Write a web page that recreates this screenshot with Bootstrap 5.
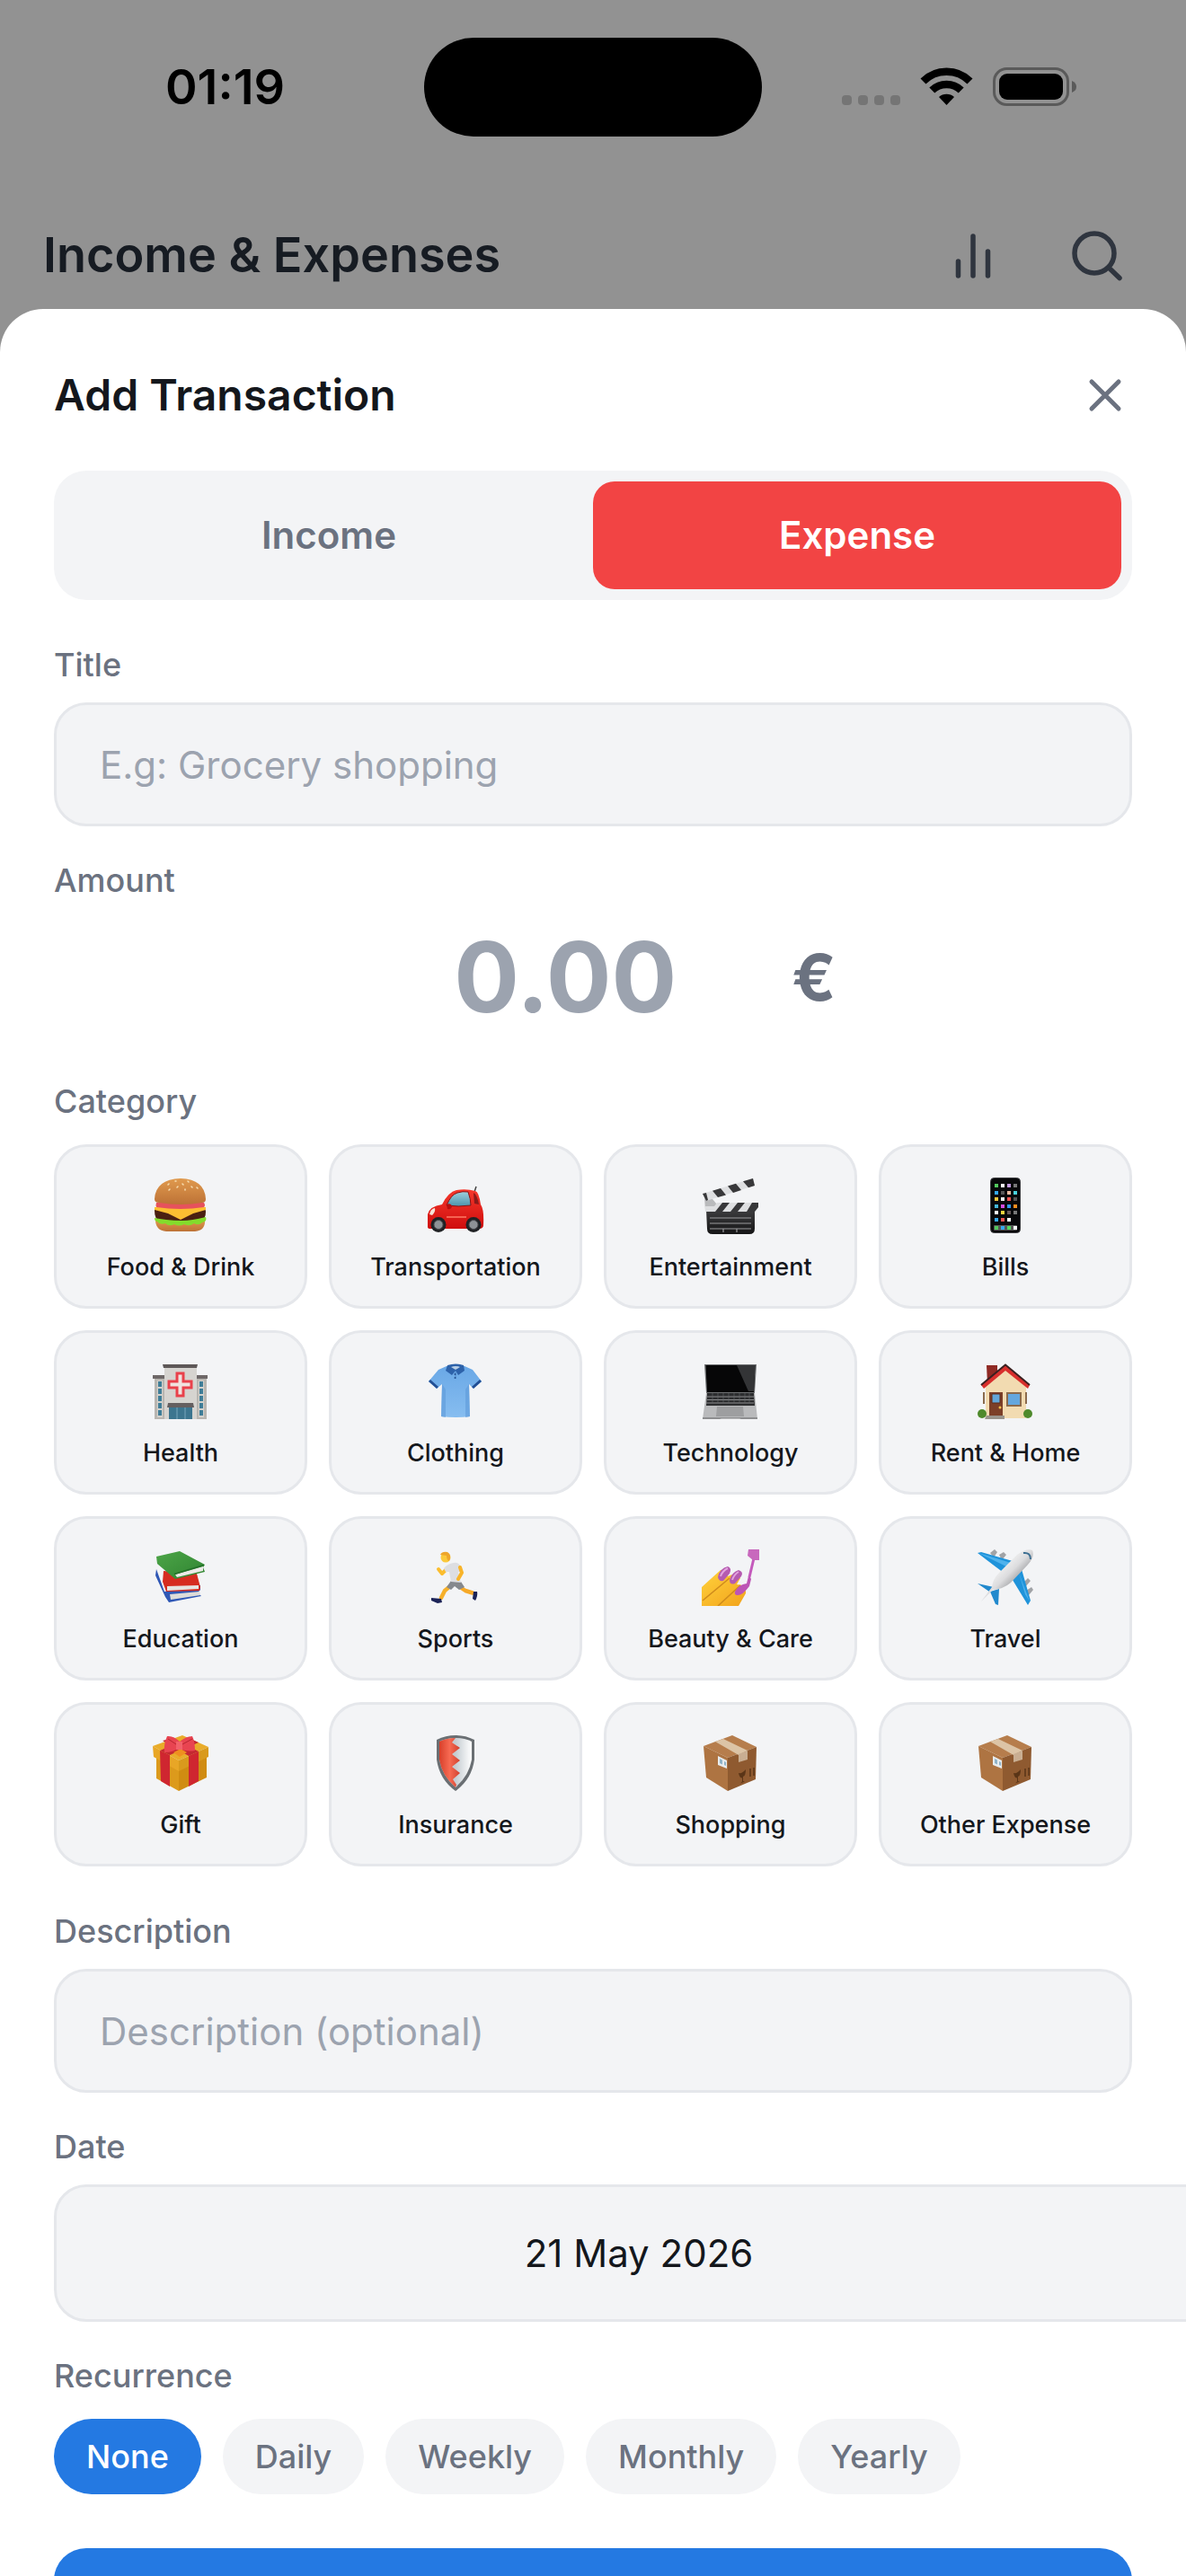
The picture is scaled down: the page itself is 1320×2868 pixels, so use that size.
<!DOCTYPE html>
<html lang="en">
<head>
<meta charset="utf-8">
<meta name="viewport" content="width=device-width, initial-scale=1">
<title>Add Transaction</title>
<link href="https://cdn.jsdelivr.net/npm/bootstrap@5.3.0/dist/css/bootstrap.min.css" rel="stylesheet">
<style>
  :root { --ink: #14171c; --muted: #6b7280; --soft: #9ca3af; --field: #f3f4f6; --line: #e5e7eb; --blue: #2479e2; --red: #f24444; }
  body { font-family: Inter, "Liberation Sans", sans-serif; color: var(--ink); background: #929292; }
  .screen { height: 100vh; overflow: hidden; }
  .status-bar { padding: 42px 120px 0; color: #000; }
  .status-side { flex: 1 1 0; }
  .clock { font-size: 54px; line-height: 64px; font-weight: 600; padding-left: 64px; }
  .island { width: 376px; height: 110px; border-radius: 55px; background: #000; }
  .app-bar { padding: 72px 66px 0 48px; height: 192px; color: #161b22; }
  .app-title { font-size: 54px; line-height: 72px; font-weight: 600; }
  .app-actions { gap: 63px; }
  .icon-btn { border: 0; background: none; padding: 0; line-height: 0; color: #2f353f; }
  .sheet { background: #fff; border-radius: 48px 48px 0 0; padding: 60px 60px 0; overflow: hidden; }
  .sheet-title { font-size: 48px; line-height: 72px; font-weight: 600; }
  .close-btn { color: var(--muted); }
  .segment { background: var(--field); border-radius: 36px; padding: 12px; margin-top: 48px; }
  .segment-btn { flex: 1 1 0; height: 120px; border: 0; border-radius: 24px; background: none; color: var(--muted); font-size: 42px; line-height: 60px; font-weight: 600; }
  .segment-btn.active { background: var(--red); color: #fff; }
  .field-label { display: block; font-size: 36px; line-height: 48px; font-weight: 500; color: var(--muted); margin: 36px 0 18px; }
  .section-label { margin-top: 48px; }
  .group-label { margin-bottom: 24px; }
  .field-box { display: block; width: 100%; background: var(--field); border: 3px solid var(--line); border-radius: 36px; height: 138px; padding: 0 48px; font-size: 42px; line-height: 60px; color: var(--ink); }
  .field-box::placeholder, .amount-input::placeholder { color: var(--soft); opacity: 1; }
  .amount-row { gap: 12px; }
  .amount-input { width: 480px; height: 132px; border: 0; background: none; padding: 0; text-align: center; font-size: 108px; line-height: 132px; font-weight: 700; color: var(--ink); }
  .currency { font-size: 72px; line-height: 90px; font-weight: 700; color: var(--muted); }
  .cat-grid { display: grid; grid-template-columns: repeat(4, 1fr); gap: 24px; }
  .cat-btn { background: var(--field); border: 3px solid var(--line); border-radius: 36px; padding: 33px 0 27px; gap: 20px; color: var(--ink); font-size: 27px; line-height: 33px; font-weight: 500; }
  .cat-btn svg { width: 64px; height: 64px; }
  .date-box { width: calc(100% + 102px); height: 153px; text-align: center; }
  .chip-btn { border: 0; border-radius: 42px; height: 84px; padding: 0 36px; background: var(--field); color: var(--muted); font-size: 36px; line-height: 48px; font-weight: 500; }
  .chip-btn.active { background: var(--blue); color: #fff; }
  .chip-row { gap: 24px; }
  .save-btn { display: block; width: 100%; border: 0; border-radius: 36px; background: var(--blue); color: #fff; height: 150px; margin-top: 60px; }
</style>
</head>
<body>
<svg width="0" height="0" class="position-absolute" aria-hidden="true">
  <defs>
    <linearGradient id="bun" x2="0" y2="1"><stop stop-color="#e09a4e"/><stop offset="1" stop-color="#bd7236"/></linearGradient>
    <linearGradient id="glass" x2="0" y2="1"><stop stop-color="#9fd0dc"/><stop offset="1" stop-color="#4c93ac"/></linearGradient>
    <linearGradient id="carred" x2="0" y2="1"><stop stop-color="#f5382c"/><stop offset="1" stop-color="#cf0d0d"/></linearGradient>
    <linearGradient id="cloth" x2="0" y2="1"><stop stop-color="#6aa8e6"/><stop offset="1" stop-color="#86bdf0"/></linearGradient>
    <linearGradient id="slate" x2="0" y2="1"><stop stop-color="#3d3d3f"/><stop offset="1" stop-color="#151516"/></linearGradient>
    <linearGradient id="silver" x1=".3" y1=".3" x2=".7" y2=".7"><stop stop-color="#f7f7f7"/><stop offset=".5" stop-color="#dcdcde"/><stop offset="1" stop-color="#8f9194"/></linearGradient>
    <linearGradient id="skin" x2="1" y2="1"><stop stop-color="#ffd23c"/><stop offset="1" stop-color="#f2a31c"/></linearGradient>
    <linearGradient id="green" x2="1" y2="1"><stop stop-color="#4da548"/><stop offset="1" stop-color="#2f8431"/></linearGradient>
    <linearGradient id="shieldred" x2="1" y2="0"><stop stop-color="#d8402b"/><stop offset=".5" stop-color="#f76a52"/><stop offset="1" stop-color="#d2412f"/></linearGradient>
    <linearGradient id="steel" x2="1" y2="0"><stop stop-color="#b9c2c8"/><stop offset=".5" stop-color="#c5ccd1"/><stop offset="1" stop-color="#fff"/></linearGradient>
    <symbol id="parcel" viewBox="0 0 64 64">
      <path d="M34 1L61 14L29 26L2 13Z" fill="#b67d4c"/>
      <path d="M2 13L29 26V63L5 48Z" fill="#ae7442"/>
      <path d="M29 26L61 14L60 50L29 63Z" fill="#8f5a30"/>
      <path d="M15 8L24 5L51 18L41 23Z" fill="#dcc4a6"/>
      <path d="M41 22L51 18V28L41 31Z" fill="#c9ae92"/>
      <path d="M18 24L28 29V38L18 34Z" fill="#e8ecee"/><path d="M20 27l3 1.500v5l-3-1.500zM25 30l2 1v4l-2-1z" fill="#8fb3c8"/>
      <path d="M41 43q4 1 8-4q0 7-3 8v5l2 .500l-5 2l2-2v-4q-3 0-4-5.500z" fill="#5a3517"/>
      <path d="M54 38v9M58 37v9" stroke="#5a3517" stroke-width="1.500"/>
    </symbol>
  </defs>
</svg>
<div class="screen d-flex flex-column">
  <div class="status-bar d-flex align-items-center flex-shrink-0">
    <div class="status-side"><span class="clock">01:19</span></div>
    <div class="island"></div>
    <div class="status-side d-flex justify-content-end">
      <svg width="264" height="48" viewBox="0 0 264 48" role="img" aria-label="Signal, Wi-Fi and battery">
        <g fill="#757575"><rect x="1" y="33" width="11" height="11" rx="4"/><rect x="19" y="33" width="11" height="11" rx="4"/><rect x="37" y="33" width="11" height="11" rx="4"/><rect x="55" y="33" width="11" height="11" rx="4"/></g>
        <g fill="none" stroke="#000" stroke-width="8.500"><path d="M91.500 17.500A37 37 0 0 1 143.500 17.500"/><path d="M101.300 27.500A23.200 23.200 0 0 1 133.700 27.500"/></g>
        <path d="M109 35A13 13 0 0 1 126 35L117.500 44Z"/>
        <rect x="170.500" y="3.500" width="82" height="40" rx="14" fill="none" stroke="#5a5a5a" stroke-width="3"/>
        <rect x="176" y="9" width="71" height="29" rx="9"/>
        <path d="M257 17q5 2 5 6.500t-5 6.500z" fill="#5a5a5a"/>
      </svg>
    </div>
  </div>
  <header class="app-bar d-flex align-items-center justify-content-between flex-shrink-0">
    <h1 class="app-title m-0">Income &amp; Expenses</h1>
    <div class="app-actions d-flex align-items-center">
      <button class="icon-btn" aria-label="Statistics"><svg width="72" height="72" viewBox="0 0 72 72" fill="none" stroke="currentColor" stroke-width="5.500" stroke-linecap="round"><path d="M19.500 59V43M36 59V15M52.500 59V32"/></svg></button>
      <button class="icon-btn" aria-label="Search"><svg width="72" height="72" viewBox="0 0 72 72" fill="none" stroke="currentColor" stroke-width="5.500" stroke-linecap="round"><circle cx="36" cy="34" r="22"/><path d="M52 50L64 61.500"/></svg></button>
    </div>
  </header>

  <main class="sheet flex-grow-1">
    <div class="d-flex align-items-center justify-content-between">
      <h2 class="sheet-title m-0">Add Transaction</h2>
      <button class="icon-btn close-btn" aria-label="Close"><svg width="60" height="60" viewBox="0 0 60 60" fill="none" stroke="currentColor" stroke-width="5" stroke-linecap="round"><path d="M15 15L45 45M45 15L15 45"/></svg></button>
    </div>
    <div class="segment d-flex" role="group" aria-label="Type">
      <button class="segment-btn">Income</button>
      <button class="segment-btn active">Expense</button>
    </div>

    <form>
      <label class="field-label section-label" for="title">Title</label>
      <input class="field-box" id="title" type="text" placeholder="E.g: Grocery shopping">

      <label class="field-label" for="amount">Amount</label>
      <div class="amount-row d-flex align-items-center justify-content-center">
        <input class="amount-input" id="amount" type="text" inputmode="decimal" placeholder="0.00">
        <span class="currency">€</span>
      </div>

      <h3 class="field-label section-label group-label" id="cat-label">Category</h3>
      <div class="cat-grid" role="group" aria-labelledby="cat-label">
        <button type="button" class="cat-btn d-flex flex-column align-items-center">
          <svg viewBox="0 0 64 64"><path d="M4 48H59Q60 60 48 61H16Q4 60 4 48Z" fill="url(#bun)"/><path d="M3 36Q3 34 8 34H56Q60 35 60 39Q60 48 54 49H9Q3 48 3 38Z" fill="#4a2012"/><path d="M3 46Q8 47 16 48T34 49T60 45Q62 50 56 51Q52 55 47 52Q42 56 36 53Q30 56 25 53Q19 56 15 52Q9 54 6 50Q3 50 3 46Z" fill="#84dc2c"/><path d="M3 34L60 34V37L46 41L32 48L18 41L3 37Z" fill="#fcbe32"/><path d="M5 29H58Q60 32 58 34Q32 38 5 34Q4 32 5 29Z" fill="#e6525c"/><path d="M3 25Q4 3 32 2Q59 3 60 25Q60 29 56 29Q32 33 8 29Q3 29 3 25Z" fill="url(#bun)"/><g stroke="#f7dfb2" stroke-width="1.500" stroke-linecap="round"><path d="M18 9l1-1M26 5l1 0M34 8l1 1M40 5l1 1M44 11l1 1M28 12l1-1M37 14v1M20 14l-1 1M50 12l1 1"/></g></svg>Food &amp; Drink
        </button>
        <button type="button" class="cat-btn d-flex flex-column align-items-center">
          <svg viewBox="0 0 64 64"><path d="M53 17L55 11" stroke="#444" stroke-width="1.500"/><path d="M1 56V42Q3 33 17 31Q24 17 33 15Q44 13 54 16Q58 17 60 31Q64 37 63 54Q63 58 58 58H4Q1 58 1 56Z" fill="url(#carred)"/><path d="M22 32Q27 20 34 18Q40 16 46 17Q49 25 49 32Q35 34 22 32Z" fill="url(#glass)" stroke="#8b1010" stroke-width="1"/><path d="M52 18Q56 20 58 31L53 30Z" fill="#8b1a1a"/><path d="M22 31q5-2 6 2q-1 4-5 3z" fill="#b80d0d"/><path d="M3 42Q4 36 9 35Q10 39 6 43Z" fill="#f6e4d8"/><path d="M22 45H44" stroke="#ff7b66" stroke-width="1.500"/><g fill="#202225"><circle cx="13" cy="53.500" r="8.500"/><circle cx="52" cy="53.500" r="8.500"/></g><g fill="#8d9296" stroke="#4b4e52"><circle cx="13" cy="53.500" r="5"/><circle cx="52" cy="53.500" r="5"/></g></svg>Transportation
        </button>
        <button type="button" class="cat-btn d-flex flex-column align-items-center">
          <svg viewBox="0 0 64 64"><path d="M3 22L12 25L17 31V38H4Z" fill="#b9babc"/><path d="M1 19L57 2L59 10L5 27Z" fill="#dedfe1"/><path d="M12 15.700L21 12.900L27 20.500L18 23ZM29 10.500L38 7.800L44 15L35 18ZM46 5.300L57 2L59 10L52 12.300ZM1 19L5 18L7 26L5 27Z" fill="#38383a"/><path d="M5 37H59V58Q59 64 53 64H12Q6 64 6 58Z" fill="url(#slate)"/><path d="M17 29H63V34L60 39H4V33H14Z" fill="#dedfe1"/><path d="M23 29h8l-8 10h-8zM40 29h8l-8 10h-8zM56 29h7v5l-4 5h-9z" fill="#38383a"/><path d="M9 46H55M9 52H55M9 58H55M24 58V62M39 58V62" stroke="#9b9b9d" stroke-width="1.200"/></svg>Entertainment
        </button>
        <button type="button" class="cat-btn d-flex flex-column align-items-center">
          <svg viewBox="0 0 64 64"><rect x="15.500" y="1.500" width="33" height="61" rx="4" fill="#08080a" stroke="#3b3b3f"/><rect x="19" y="54" width="26" height="6" rx="1" fill="#555"/><g><path d="M20 8h4v4h-4z" fill="#52c95e"/><path d="M27 8h4v4h-4z" fill="#fff"/><path d="M34 8h4v4h-4z" fill="#c39be0"/><path d="M41 8h4v4h-4z" fill="#777"/><path d="M20 16h4v4h-4z" fill="#34a8ee"/><path d="M27 16h4v4h-4z" fill="#555"/><path d="M34 16h4v4h-4z" fill="#e7b8a0"/><path d="M41 16h4v4h-4z" fill="#49d1dc"/><path d="M20 23h4v4h-4z" fill="#f6c83c"/><path d="M27 23h4v4h-4z" fill="#eee"/><path d="M34 23h4v4h-4z" fill="#ee5350"/><path d="M41 23h4v4h-4z" fill="#555"/><path d="M20 31h4v4h-4z" fill="#45b8d8"/><path d="M27 31h4v4h-4z" fill="#d64be0"/><path d="M34 31h4v4h-4z" fill="#2f9af0"/><path d="M41 31h4v4h-4z" fill="#f68d1e"/><path d="M20 38h4v4h-4z" fill="#fff"/><path d="M27 38h4v4h-4z" fill="#f5d33f"/><path d="M34 38h4v4h-4z" fill="#67595a"/><path d="M41 38h4v4h-4z" fill="#777"/><path d="M20 46h4v4h-4z" fill="#34a8ee"/><path d="M27 46h4v4h-4z" fill="#ee5350"/><path d="M34 46h4v4h-4z" fill="#fff"/><path d="M20 55h4v4h-4z" fill="#52c95e"/><path d="M27 55h4v4h-4z" fill="#34a8ee"/><path d="M34 55h4v4h-4z" fill="#52d95e"/><path d="M41 55h4v4h-4z" fill="#fff"/></g></svg>Bills
        </button>
        <button type="button" class="cat-btn d-flex flex-column align-items-center">
          <svg viewBox="0 0 64 64"><path d="M3 17H61V63H3Z" fill="#b9b6b1"/><path d="M1 14H62V18H1Z" fill="#6e6868"/><path d="M14 5H50V63H14Z" fill="#d6d4d0"/><path d="M12 2H51L50 6H13Z" fill="#5e5858"/><path d="M6 20h6v41H6zM52 20h6v41h-6z" fill="#d3d1cc"/><path d="M7 21h4v6H7zM7 29h4v6H7zM7 37h4v6H7zM7 45h4v6H7zM7 53h4v6H7zM53 21h4v6h-4zM53 29h4v6h-4zM53 37h4v6h-4zM53 45h4v6h-4zM53 53h4v6h-4z" fill="#3f7d98"/><path d="M28 12H35V21H44V28H35V37H28V28H19V21H28Z" fill="#f0e2df" stroke="#e9414b" stroke-width="3"/><path d="M19 49H45V63H19Z" fill="#3c758f"/><path d="M28 50V63M37 50V63" stroke="#78a7bb"/><path d="M18 45H46L47 50H17Z" fill="#655f60"/></svg>Health
        </button>
        <button type="button" class="cat-btn d-flex flex-column align-items-center">
          <svg viewBox="0 0 64 64"><path d="M22 4L42 4L51 8L61 21L52 29L47 24L48 60Q32 62 16 60L17 24L11 29L2 21L13 8Z" fill="url(#cloth)"/><path d="M17 24L16 60Q19 61 21 61V30ZM47 24L48 60Q45 61 43 61V30Z" fill="#5e9ad8" opacity=".6"/><path d="M2 21L11 29L13 27L4 19ZM61 21L52 29L50 27L59 19Z" fill="#234f94"/><path d="M23 3Q32 0 41 3L42 9L35 14L32 9L28 14L21 9Z" fill="#2d62aa"/><path d="M27 5Q32 3 37 5L32 8Z" fill="#b8cfe6"/><path d="M32 10V18" stroke="#4c86c8"/><circle cx="31.500" cy="13" r="1" fill="#24508f"/><circle cx="31.500" cy="17" r="1" fill="#24508f"/></svg>Clothing
        </button>
        <button type="button" class="cat-btn d-flex flex-column align-items-center">
          <svg viewBox="0 0 64 64"><path d="M3 2H61L59 34H5Z" fill="#6d6f71"/><path d="M4.500 3H59.500L58 33H6Z" fill="#060607"/><path d="M39 3H59.500L58 32H52Z" fill="#333436"/><path d="M5 34H59L62 63H1Z" fill="#b9babc"/><path d="M6 34H58L59 48H5Z" fill="#2c2d2f"/><path d="M6 38H58M6 41.500H58M5 45H58" stroke="#8a8b8d" stroke-width="1"/><path d="M12 34v11M18 34v11M24 34v11M30 34v11M36 34v11M42 34v11M48 34v11M53 34v11" stroke="#6a6b6d" stroke-width=".6"/><path d="M17 49H46L47 60H16Z" fill="#9d9ea0"/><path d="M1 61H62V63H44L42 62H22L20 63H1Z" fill="#8d8e90"/></svg>Technology
        </button>
        <button type="button" class="cat-btn d-flex flex-column align-items-center">
          <svg viewBox="0 0 64 64"><path d="M11 3H23V16L12 24Z" fill="#8f2a24"/><path d="M10 27L32 8L55 27V62H10Z" fill="#f2dbb1"/><path d="M5 25L32 3L59 25L57 29L32 9L8 29Z" fill="#d82f2c"/><path d="M5 25L32 2.500L59 25" fill="none" stroke="#3a2020" stroke-width="2"/><path d="M7 33h2v13H7zM54 33h2v13h-2z" fill="#8a6a4c"/><path d="M14 33H29V61H14Z" fill="#7c3f28"/><path d="M17 35h9v10h-9z" fill="#63a6d8" stroke="#5c2b1a"/><path d="M34 34H49V48H34Z" fill="#64a7de" stroke="#8a6a4c" stroke-width="2"/><circle cx="26" cy="50" r="1.500" fill="#f2c14a"/><g fill="#4f8a2c"><circle cx="6" cy="57" r="5"/><circle cx="57" cy="57" r="5"/></g><path d="M11 59H31V63H9Z" fill="#9a948c"/></svg>Rent &amp; Home
        </button>
        <button type="button" class="cat-btn d-flex flex-column align-items-center">
          <svg viewBox="0 0 64 64"><path d="M5 23L14 48L54 41V46L51 49L55 53L19 60L15 54L4 30Z" fill="#2f57b5"/><path d="M20 51L53 48L54 52L21 57Z" fill="#dddcd9"/><path d="M13 25L50 28L54 43L53 47L16 48L12 37Z" fill="#d62c20"/><path d="M17 42L52 41V45L17 47Z" fill="#e6e5e2"/><path d="M5 9L31 3L59 18L57 21L59 26L26 34L6 17Z" fill="url(#green)"/><path d="M26 29L57 20L57 25L28 32Z" fill="#eceae7"/><path d="M25 28.500L58 18.500" stroke="#23702a" stroke-width="1.500"/></svg>Education
        </button>
        <button type="button" class="cat-btn d-flex flex-column align-items-center">
          <svg viewBox="0 0 64 64" fill="none" stroke-linecap="round" stroke-linejoin="round"><path d="M22 23L17 28L13 23" stroke="#fbbd2e" stroke-width="4"/><path d="M26 42L20 47L16 55" stroke="#f6b02a" stroke-width="4.500"/><path d="M37 43L43 47L51 49.500" stroke="#f6a928" stroke-width="4.500"/><path d="M5 55L16 56L17 60L12 61L5 58ZM52 48L56 48Q57 53 54 58L51 56Z" fill="#1b2357"/><path d="M27 36L38 37L42 43L36 46L31 42L27 46L22 43Z" fill="#85888d"/><path d="M19 22Q23 17 30 16Q36 15 38 21L39 26L35 26L38 38L27 37L25 26L21 26Z" fill="#dddee2"/><path d="M37 21L39 27L35 34" stroke="#f8b42a" stroke-width="4"/><circle cx="21" cy="10" r="5.500" fill="#fbc93b"/><path d="M15 7Q17 3 23 4Q28 7 25 14Q22 13 22 8Z" fill="#eea52a"/></svg>Sports
        </button>
        <button type="button" class="cat-btn d-flex flex-column align-items-center">
          <svg viewBox="0 0 64 64"><path d="M0 43L21 24Q28 23 29 31Q38 26 43 33L39 40Q50 40 49 50L41 64H0Z" fill="url(#skin)"/><path d="M1 58L31 33M18 64L43 41" stroke="#d08c1c" stroke-width="1.500"/><path d="M18 32Q20 22 29 20Q34 22 31 28L24 36Q19 37 18 32ZM31 35Q33 27 41 24Q47 26 44 31L37 39Q31 41 31 35Z" fill="#b55bb0"/><path d="M21 31Q23 25 29 22M34 35Q36 29 41 26" stroke="#e2a4df" stroke-width="2" fill="none"/><path d="M37 48Q41 40 50 39L52 31L54 32L55 34L53 42Q45 53 39 52Q36 51 37 48Z" fill="#bd55b5"/><path d="M53 32L58 11" stroke="#c45abc" stroke-width="3"/><path d="M52 1H64V13H57L51 8Z" fill="#c868bd"/></svg>Beauty &amp; Care
        </button>
        <button type="button" class="cat-btn d-flex flex-column align-items-center">
          <svg viewBox="0 0 64 64"><path d="M15 5l5-4l3 3l-4 6zM25 7l5-3l3 3l-5 6zM52 38l5-5l3 3l-6 7zM55 47l6-4l2 3l-5 6z" fill="#a1a3a6"/><path d="M1 5L5 4L40 14L30 27L18 18ZM50 23L40 35L57 63L60 58Z" fill="#1f93da"/><path d="M1 39L19 43L14 48ZM15 48L25 45L24 63L21 62Z" fill="#2189cd"/><path d="M2 5L38 16L33 20ZM47 27L59 59L54 51Z" fill="#4fb2ec"/><path d="M62 2Q65 9 57 18L38 38Q30 45 18 46L5 59L17 43Q18 34 25 27L45 7Q56-1 62 2Z" fill="url(#silver)"/><path d="M52 5Q60 4 60 12" stroke="#3d6f92" stroke-width="2" fill="none"/></svg>Travel
        </button>
        <button type="button" class="cat-btn d-flex flex-column align-items-center">
          <svg viewBox="0 0 64 64"><path d="M5 24L30 38V63L5 49Z" fill="#dc9a1c"/><path d="M30 38L61 24V48L30 63Z" fill="#d08c12"/><path d="M1 13L34 1L63 14L30 29Z" fill="#e9ac2a"/><path d="M1 13L30 29V41L2 25Z" fill="#e8a626"/><path d="M30 29L63 14V25L30 41Z" fill="#d99a1d"/><path d="M9 18L20 23V58L10 52ZM41 24L52 19V52L41 58Z" fill="#cf2630"/><path d="M9 18L41 4L52 9L20 23ZM12 7L23 4L52 19L41 24Z" fill="#c52831"/><path d="M24 20L32 16L39 20L31 25Z" fill="#ef8f20"/><path d="M31 8Q24 1 17 2Q13 11 14 20Q24 20 30 15Q38 20 48 18Q48 8 45 2Q38 2 31 8Z" fill="#e84451"/><path d="M27 8h7v9h-7z" fill="#f2616a"/><path d="M18 5L27 11M45 5L34 11" stroke="#b72531"/></svg>Gift
        </button>
        <button type="button" class="cat-btn d-flex flex-column align-items-center">
          <svg viewBox="0 0 64 64"><path d="M32 1Q43 1 53 6V28Q50 50 32 63Q14 50 11 28V6Q21 1 32 1Z" fill="#6a6f73"/><path d="M32 4Q42 4 50 8V28Q47 46 32 59Q17 46 14 28V8Q22 4 32 4Z" fill="url(#steel)"/><path d="M14 8Q22 4 32 4L28 9L37 15L28 22L37 29L28 36L37 43L29 50L33 56L32 59Q17 46 14 28Z" fill="url(#shieldred)"/></svg>Insurance
        </button>
        <button type="button" class="cat-btn d-flex flex-column align-items-center"><svg><use href="#parcel"/></svg>Shopping</button>
        <button type="button" class="cat-btn d-flex flex-column align-items-center"><svg><use href="#parcel"/></svg>Other Expense</button>
      </div>

      <label class="field-label section-label" for="description">Description</label>
      <input class="field-box" id="description" type="text" placeholder="Description (optional)">

      <label class="field-label" for="date">Date</label>
      <input class="field-box date-box" id="date" type="text" value="21 May 2026">

      <h3 class="field-label group-label" id="rec-label">Recurrence</h3>
      <div class="chip-row d-flex" role="group" aria-labelledby="rec-label">
        <button type="button" class="chip-btn active">None</button>
        <button type="button" class="chip-btn">Daily</button>
        <button type="button" class="chip-btn">Weekly</button>
        <button type="button" class="chip-btn">Monthly</button>
        <button type="button" class="chip-btn">Yearly</button>
      </div>
      <button type="submit" class="save-btn" aria-label="Save"></button>
    </form>
  </main>
</div>
<script src="https://cdn.jsdelivr.net/npm/bootstrap@5.3.0/dist/js/bootstrap.bundle.min.js"></script>
</body>
</html>
